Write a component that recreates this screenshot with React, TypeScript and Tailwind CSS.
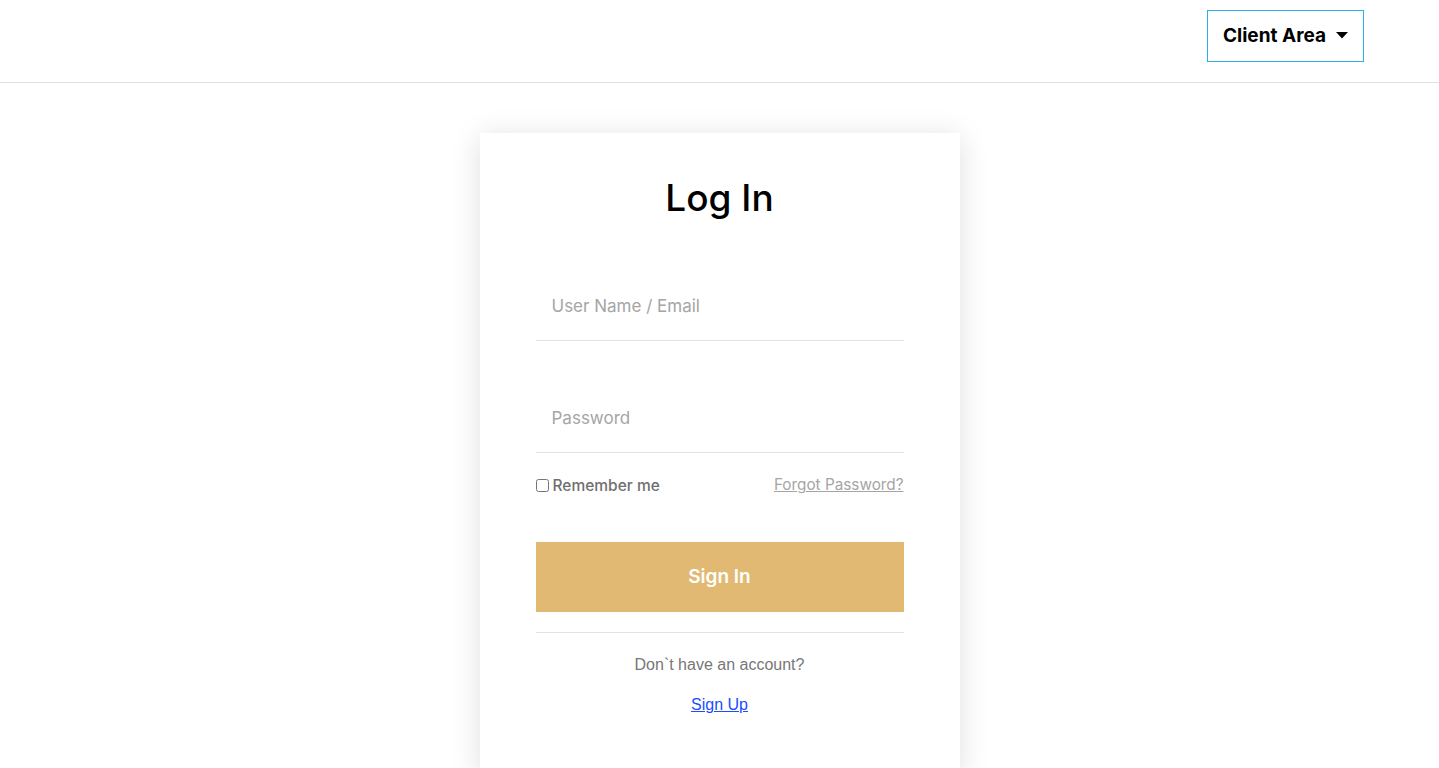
export default function App() {
  return (
    <div className="min-h-screen w-full bg-white font-['Inter','Liberation_Sans',sans-serif]">
      {/* HEADER */}
      <header className="h-[83px] border-b border-[#e2e2e2] flex items-start justify-end pr-[75px] pt-[10px]">
        <button className="h-[52px] w-[157px] border border-[#29aee6] flex items-center justify-center gap-[10px] text-[19px] font-bold text-black">
          Client Area
          <svg width="12" height="7" viewBox="0 0 12 7" className="mt-[-2px]">
            <path d="M0 0h12L6 6.5z" fill="#000" />
          </svg>
        </button>
      </header>

      {/* CARD */}
      <div className="flex justify-center pt-[50px]">
        <div className="w-[480px] h-[640px] bg-white shadow-[0_4px_28px_rgba(0,0,0,0.13)] px-[56px] pt-[42px]">
          <h1 className="text-center text-[37px] font-medium text-black leading-[46px]">Log In</h1>

          <div className="mt-[37px]">
            <input
              placeholder="User Name / Email"
              className="w-full h-[83px] border-b border-[#e2e2e2] px-[16px] pt-[13px] text-[17px] outline-none placeholder:text-[#a5a5a5]"
            />
          </div>
          <div className="mt-[29px]">
            <input
              type="password"
              placeholder="Password"
              className="w-full h-[83px] border-b border-[#e2e2e2] px-[16px] pt-[13px] text-[17px] outline-none placeholder:text-[#a5a5a5]"
            />
          </div>

          <div className="mt-[21px] flex items-center justify-between">
            <label className="flex items-center gap-[4px] text-[15.5px] text-[#6f6f6f] font-medium">
              <input type="checkbox" className="w-[13px] h-[13px] m-0" />
              Remember me
            </label>
            <a href="#" className="text-[15.3px] text-[#a5a5a5] underline">Forgot Password?</a>
          </div>

          <button className="mt-[45px] w-full h-[70px] bg-[#e2b973] text-white text-[19px] font-semibold">
            Sign In
          </button>

          <div className="mt-[20px] border-t border-[#e2e2e2] pt-[20px] text-center font-['Liberation_Sans','Arial',sans-serif]">
            <p className="text-[16px] text-[#777]">Don`t have an account?</p>
            <a href="#" className="inline-block mt-[16px] text-[16px] text-[#1a4dff] underline">Sign Up</a>
          </div>
        </div>
      </div>
    </div>
  );
}
